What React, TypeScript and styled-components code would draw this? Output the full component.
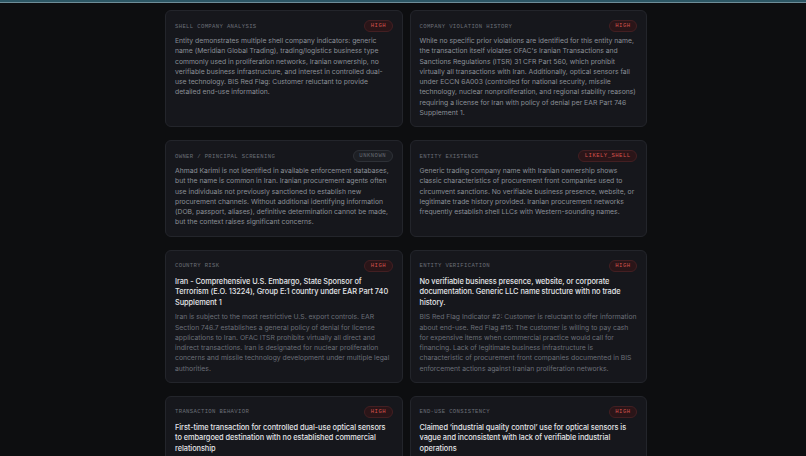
import React from 'react';
import styled, { createGlobalStyle } from 'styled-components';

type Tone = 'high' | 'unknown';

type Finding = {
  title: string;
  badge: string;
  tone: Tone;
  heading?: string;
  body?: string;
};

const findings: Finding[] = [
  {
    title: 'Shell Company Analysis',
    badge: 'HIGH',
    tone: 'high',
    body: 'Entity demonstrates multiple shell company indicators: generic name (Meridian Global Trading), trading/logistics business type commonly used in proliferation networks, Iranian ownership, no verifiable business infrastructure, and interest in controlled dual-use technology. BIS Red Flag: Customer reluctant to provide detailed end-use information.',
  },
  {
    title: 'Company Violation History',
    badge: 'HIGH',
    tone: 'high',
    body: "While no specific prior violations are identified for this entity name, the transaction itself violates OFAC's Iranian Transactions and Sanctions Regulations (ITSR) 31 CFR Part 560, which prohibit virtually all transactions with Iran. Additionally, optical sensors fall under ECCN 6A003 (controlled for national security, missile technology, nuclear nonproliferation, and regional stability reasons) requiring a license for Iran with policy of denial per EAR Part 746 Supplement 1.",
  },
  {
    title: 'Owner / Principal Screening',
    badge: 'UNKNOWN',
    tone: 'unknown',
    body: 'Ahmad Karimi is not identified in available enforcement databases, but the name is common in Iran. Iranian procurement agents often use individuals not previously sanctioned to establish new procurement channels. Without additional identifying information (DOB, passport, aliases), definitive determination cannot be made, but the context raises significant concerns.',
  },
  {
    title: 'Entity Existence',
    badge: 'LIKELY_SHELL',
    tone: 'high',
    body: 'Generic trading company name with Iranian ownership shows classic characteristics of procurement front companies used to circumvent sanctions. No verifiable business presence, website, or legitimate trade history provided. Iranian procurement networks frequently establish shell LLCs with Western-sounding names.',
  },
  {
    title: 'Country Risk',
    badge: 'HIGH',
    tone: 'high',
    heading: 'Iran - Comprehensive U.S. Embargo, State Sponsor of Terrorism (E.O. 13224), Group E:1 country under EAR Part 740 Supplement 1',
    body: 'Iran is subject to the most restrictive U.S. export controls. EAR Section 746.7 establishes a general policy of denial for license applications to Iran. OFAC ITSR prohibits virtually all direct and indirect transactions. Iran is designated for nuclear proliferation concerns and missile technology development under multiple legal authorities.',
  },
  {
    title: 'Entity Verification',
    badge: 'HIGH',
    tone: 'high',
    heading: 'No verifiable business presence, website, or corporate documentation. Generic LLC name structure with no trade history.',
    body: 'BIS Red Flag Indicator #2: Customer is reluctant to offer information about end-use. Red Flag #15: The customer is willing to pay cash for expensive items when commercial practice would call for financing. Lack of legitimate business infrastructure is characteristic of procurement front companies documented in BIS enforcement actions against Iranian proliferation networks.',
  },
  {
    title: 'Transaction Behavior',
    badge: 'HIGH',
    tone: 'high',
    heading: 'First-time transaction for controlled dual-use optical sensors to embargoed destination with no established commercial relationship',
    body: 'Iran-destined shipments of 6A003 optical sensors from a newly formed intermediary with no trading record match known diversion patterns.',
  },
  {
    title: 'End-Use Consistency',
    badge: 'HIGH',
    tone: 'high',
    heading: 'Claimed \u2018industrial quality control\u2019 use for optical sensors is vague and inconsistent with lack of verifiable industrial operations',
    body: 'No manufacturing facility, production line or quality programme has been documented for the stated end user.',
  },
];

const GlobalStyle = createGlobalStyle`
  html, body {
    margin: 0;
    padding: 0;
    background: #0d0e10;
    overflow: hidden;
  }
  body {
    font-family: Inter, "Noto Sans", sans-serif;
  }
`;

export default function App() {
  return (
    <>
      <GlobalStyle />
      <Page>
        <TopRule />
        <Grid>
          {findings.map((f) => (
            <Card key={f.title}>
              <CardHeader>
                <CardTitle>{f.title}</CardTitle>
                <Badge tone={f.tone}>{f.badge}</Badge>
              </CardHeader>
              {f.heading && <Heading>{f.heading}</Heading>}
              {f.body && <Body muted={!!f.heading}>{f.body}</Body>}
            </Card>
          ))}
        </Grid>
      </Page>
    </>
  );
}

const Page = styled.main`
  min-height: 456px;
  background: #0d0e10;
`;

const TopRule = styled.div`
  height: 2px;
  background: #2c5664;
  border-bottom: 1px solid #6e8d98;
`;

const Grid = styled.section`
  width: 482px;
  margin: 7px 0 0 165px;
  display: grid;
  grid-template-columns: 1fr 1fr;
  column-gap: 7px;
  row-gap: 13px;
`;

const Card = styled.article`
  background: #16171c;
  border: 1px solid #23252b;
  border-radius: 6px;
  padding: 9px 9px 8px;
  display: flex;
  flex-direction: column;
  gap: 4px;
  min-width: 0;
`;

const CardHeader = styled.header`
  display: flex;
  align-items: center;
  justify-content: space-between;
  height: 12px;
`;

const CardTitle = styled.h3`
  margin: 0;
  font-family: "Liberation Mono", "DejaVu Sans Mono", monospace;
  font-size: 5.6px;
  font-weight: 400;
  letter-spacing: 0.35px;
  text-transform: uppercase;
  color: #6a6e77;
`;

const Badge = styled.span<{ tone: Tone }>`
  font-family: "Liberation Mono", "DejaVu Sans Mono", monospace;
  font-size: 5.6px;
  letter-spacing: 0.45px;
  line-height: 10px;
  padding: 0 5.5px;
  border-radius: 6px;
  border: 1px solid ${({ tone }) => (tone === 'high' ? '#431f22' : '#2e3137')};
  background: ${({ tone }) => (tone === 'high' ? '#2a1518' : '#1d1f24')};
  color: ${({ tone }) => (tone === 'high' ? '#d4514c' : '#666a72')};
`;

const Heading = styled.p`
  margin: 1px 0 0;
  font-size: 7.4px;
  font-weight: 500;
  letter-spacing: -0.06px;
  line-height: 10.6px;
  color: #e4e5e8;
`;

const Body = styled.p<{ muted: boolean }>`
  margin: 0;
  font-size: 6.8px;
  line-height: 10.25px;
  color: ${({ muted }) => (muted ? '#6a6e77' : '#8b8f97')};
`;
